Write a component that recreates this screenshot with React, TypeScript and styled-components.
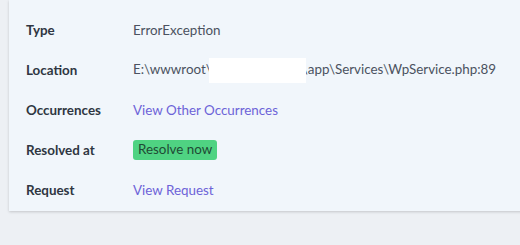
import styled, { createGlobalStyle } from "styled-components";

const GlobalStyle = createGlobalStyle`
    html, body {
        margin: 0;
        padding: 0;
        background: #edf0f4;
        font-family: Lato, "Noto Sans", sans-serif;
    }
`;

type Row = {
    label: string;
    kind: "text" | "link" | "badge" | "location";
    value: string;
};

const rows: Row[] = [
    { label: "Type", kind: "text", value: "ErrorException" },
    { label: "Location", kind: "location", value: "" },
    { label: "Occurrences", kind: "link", value: "View Other Occurrences" },
    { label: "Resolved at", kind: "badge", value: "Resolve now" },
    { label: "Request", kind: "link", value: "View Request" },
];

const renderValue = (row: Row) => {
    if (row.kind === "link") return <SLink href="#">{row.value}</SLink>;
    if (row.kind === "badge") return <SBadge>{row.value}</SBadge>;
    if (row.kind === "location")
        return (
            <SText>
                E:\wwwroot\
                <SRedact />
                \app\Services\WpService.php:89
            </SText>
        );
    return <SText>{row.value}</SText>;
};

export default function App() {
    return (
        <>
            <GlobalStyle />
            <SPage>
                <SCard>
                    {rows.map((row) => (
                        <SRow key={row.label}>
                            <SLabel>{row.label}</SLabel>
                            {renderValue(row)}
                        </SRow>
                    ))}
                </SCard>
            </SPage>
        </>
    );
}

const SPage = styled.div`
    height: 245px;
    padding-left: 9px;
    overflow: hidden;
`;

const SCard = styled.div`
    width: 540px;
    background: #f1f6fb;
    padding: 10px 0 1px 17px;
    box-shadow: 0 1px 3px rgba(0, 0, 0, 0.12), 0 1px 2px rgba(0, 0, 0, 0.06);
`;

const SRow = styled.div`
    display: grid;
    grid-template-columns: 107px 1fr;
    align-items: center;
    height: 40px;
    font-size: 13.4px;
`;

const SLabel = styled.div`
    color: #2f3642;
    font-weight: 700;
`;

const SText = styled.div`
    color: #4b5260;
    white-space: nowrap;
`;

const SRedact = styled.span`
    display: inline-block;
    vertical-align: middle;
    width: 97px;
    height: 25px;
    margin: 0 -4px 0 -3px;
    background: #ffffff;
    position: relative;
`;

const SLink = styled.a`
    color: #6d63d8;
    text-decoration: none;
`;

const SBadge = styled.span`
    justify-self: start;
    background: #4fd382;
    color: #1f4a35;
    border-radius: 3px;
    padding: 1px 5px 2px;
    line-height: 17px;
`;
